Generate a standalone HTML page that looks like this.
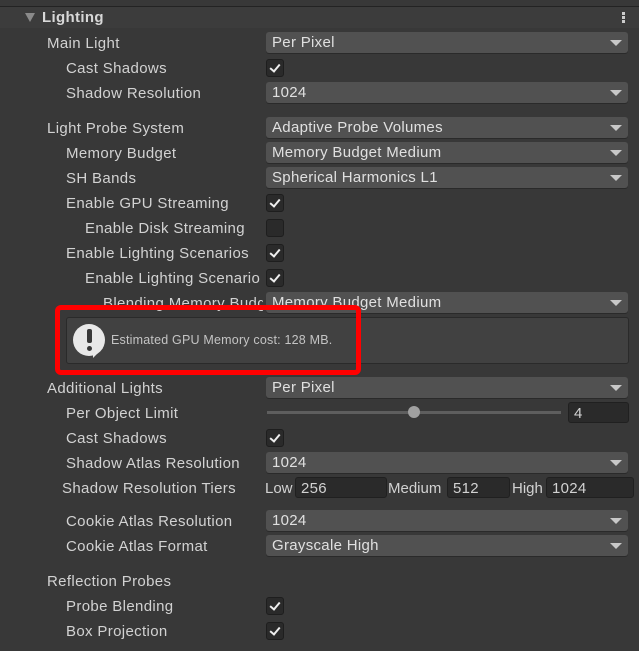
<!DOCTYPE html><html><head><style>
body{margin:0;width:639px;height:651px;background:#383838;overflow:hidden;font-family:"Liberation Sans",sans-serif;font-size:15px;color:#d2d2d2;position:relative}
.a{position:absolute}
.l{position:absolute;line-height:20px;white-space:nowrap;letter-spacing:0.35px;margin-top:2px}
.dd{position:absolute;left:266px;width:362px;height:21px;background:#515151;border-radius:3px;box-sizing:border-box;padding-left:6px;line-height:21px;color:#e0e0e0;box-shadow:0 1px 0 #2a2a2a;letter-spacing:0.3px}
.dd:after{content:"";position:absolute;right:6px;top:8px;border-left:6px solid transparent;border-right:6px solid transparent;border-top:6px solid #c8c8c8}
.cb{position:absolute;left:266px;width:18px;height:18px;background:#2a2a2a;border:1px solid #1e1e1e;border-radius:3px;box-sizing:border-box}
.cb.k:after{content:"";position:absolute;left:5px;top:2px;width:4px;height:8px;border:solid #eee;border-width:0 2px 2px 0;transform:rotate(40deg)}
.tf{position:absolute;height:21px;background:#2a2a2a;border:1px solid #202020;border-radius:3px;box-sizing:border-box;padding-left:5px;line-height:21px;letter-spacing:0.3px}
</style></head><body>
<div class="a" style="left:0;top:6px;width:639px;height:1px;background:#232323"></div>
<div class="a" style="left:0;top:7px;width:639px;height:21px;background:#3c3c3c"></div>
<div class="a" style="left:25px;top:13px;border-left:5px solid transparent;border-right:5px solid transparent;border-top:9px solid #8a8a8a"></div>
<div class="l" style="left:42px;top:6px;font-weight:bold;color:#d8d8d8">Lighting</div>
<div class="a" style="left:622px;top:12px;width:3px;height:3px;background:#ccc;box-shadow:0 4px 0 #ccc,0 8px 0 #ccc"></div>

<div class="l" style="left:47px;top:32px">Main Light</div><div class="dd" style="top:32px">Per Pixel</div>
<div class="l" style="left:66px;top:57px">Cast Shadows</div><div class="cb k" style="top:59px"></div>
<div class="l" style="left:66px;top:82px">Shadow Resolution</div><div class="dd" style="top:82px">1024</div>
<div class="l" style="left:47px;top:117px">Light Probe System</div><div class="dd" style="top:117px">Adaptive Probe Volumes</div>
<div class="l" style="left:66px;top:142px">Memory Budget</div><div class="dd" style="top:142px">Memory Budget Medium</div>
<div class="l" style="left:66px;top:167px">SH Bands</div><div class="dd" style="top:167px">Spherical Harmonics L1</div>
<div class="l" style="left:66px;top:192px">Enable GPU Streaming</div><div class="cb k" style="top:194px"></div>
<div class="l" style="left:85px;top:217px">Enable Disk Streaming</div><div class="cb" style="top:219px"></div>
<div class="l" style="left:66px;top:242px">Enable Lighting Scenarios</div><div class="cb k" style="top:244px"></div>
<div class="l" style="left:85px;top:267px;width:176px;overflow:hidden">Enable Lighting Scenario Blending</div><div class="cb k" style="top:269px"></div>
<div class="l" style="left:103px;top:292px;width:160px;overflow:hidden">Blending Memory Budget</div><div class="dd" style="top:292px">Memory Budget Medium</div>

<div class="a" style="left:66px;top:317px;width:563px;height:47px;background:#414141;border:1px solid #2a2a2a;border-radius:3px;box-sizing:border-box"></div>
<div class="a" style="left:73px;top:324px;width:32px;height:32px;border-radius:50%;background:#e8e8e8"></div>
<div class="a" style="left:93px;top:348px;width:0;height:0;border-left:10px solid #e8e8e8;border-bottom:10px solid transparent"></div>
<div class="a" style="left:87px;top:329px;width:5px;height:14px;background:#383838;border-radius:2px"></div>
<div class="a" style="left:87px;top:346px;width:5px;height:5px;background:#383838;border-radius:50%"></div>
<div class="l" style="left:111px;top:328px;font-size:12.5px;color:#c4c4c4;letter-spacing:0.2px">Estimated GPU Memory cost: 128 MB.</div>
<div class="a" style="left:55px;top:305px;width:306px;height:70px;border:5px solid #ff0000;border-radius:6px;box-sizing:border-box"></div>

<div class="l" style="left:47px;top:377px">Additional Lights</div><div class="dd" style="top:377px">Per Pixel</div>
<div class="l" style="left:66px;top:402px">Per Object Limit</div>
<div class="a" style="left:267px;top:411px;width:294px;height:3px;background:#5e5e5e"></div>
<div class="a" style="left:408px;top:406px;width:12px;height:12px;border-radius:50%;background:#a0a0a0"></div>
<div class="tf" style="left:568px;top:402px;width:61px">4</div>
<div class="l" style="left:66px;top:427px">Cast Shadows</div><div class="cb k" style="top:429px"></div>
<div class="l" style="left:66px;top:452px">Shadow Atlas Resolution</div><div class="dd" style="top:452px">1024</div>
<div class="l" style="left:62px;top:477px">Shadow Resolution Tiers</div>
<div class="l" style="left:265px;top:477px;letter-spacing:0">Low</div><div class="tf" style="left:295px;top:477px;width:92px">256</div>
<div class="l" style="left:388px;top:477px;letter-spacing:0">Medium</div><div class="tf" style="left:447px;top:477px;width:63px">512</div>
<div class="l" style="left:512px;top:477px;letter-spacing:0">High</div><div class="tf" style="left:546px;top:477px;width:88px">1024</div>
<div class="l" style="left:66px;top:510px">Cookie Atlas Resolution</div><div class="dd" style="top:510px">1024</div>
<div class="l" style="left:66px;top:535px">Cookie Atlas Format</div><div class="dd" style="top:535px">Grayscale High</div>
<div class="l" style="left:47px;top:570px">Reflection Probes</div>
<div class="l" style="left:66px;top:595px">Probe Blending</div><div class="cb k" style="top:597px"></div>
<div class="l" style="left:66px;top:620px">Box Projection</div><div class="cb k" style="top:622px"></div>
</body></html>
